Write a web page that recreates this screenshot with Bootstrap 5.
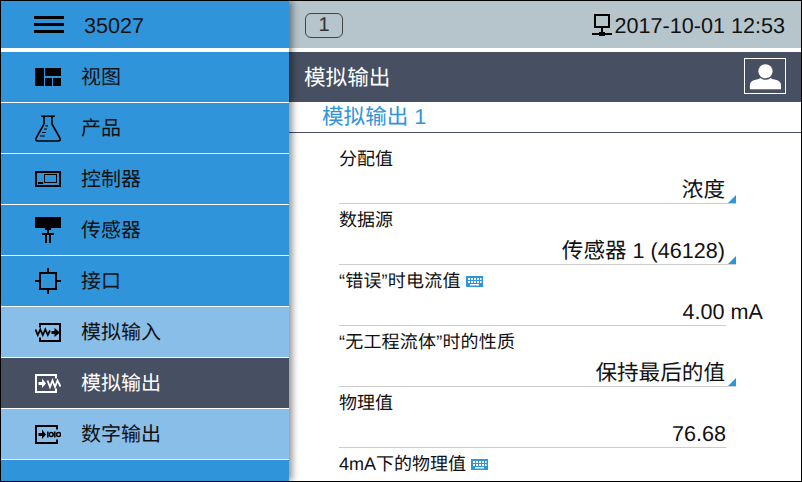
<!DOCTYPE html>
<html lang="zh">
<head>
<meta charset="utf-8">
<title>模拟输出</title>
<link href="https://cdn.jsdelivr.net/npm/bootstrap@5.3.0/dist/css/bootstrap.min.css" rel="stylesheet">
<style>
html,body{margin:0;width:802px;height:482px;overflow:hidden;background:#fff}
body{font-family:"Liberation Sans","Noto Sans CJK SC",sans-serif;color:#111;text-rendering:geometricPrecision}
.frame{width:802px;height:482px;border:1px solid #000;overflow:hidden;display:flex;position:relative}
.side{width:288px;flex:none;background:#3094db;position:relative;z-index:2;box-shadow:3px 0 7px rgba(0,0,0,.45)}
.side-head{height:47px;padding-left:33px;gap:20px;font-size:21.6px}
.side-head span{padding-top:4px}
.side-gap{height:4px;background:#fff;position:relative;box-shadow:0 2px 3px rgba(0,0,0,.2)}
.side-list{border-radius:0;background:transparent}
.side-list .list-group-item,.side-list .list-group-item:last-child{height:51px;padding:0 0 0 34px;gap:20px;background:#3094db;border:0;border-bottom:1px solid #fff;color:#111;font-size:20px;border-radius:0}
.side-list .list-group-item span{padding-top:2px}
.side-list .list-group-item.lit{background:#89bee8}
.side-list .list-group-item.cur{background:#474f62;color:#fff}
.side-list svg{flex:none;display:block}
.pane{flex:1;min-width:0;display:flex;flex-direction:column}
.topbar{height:47px;flex:none;background:#b6c4cc;padding:0 16px 0 16px;font-size:21.6px}
.count{width:38px;height:25px;border:1.5px solid #444;border-radius:6px;font-size:20px;line-height:22px;text-align:center;color:#333;margin-top:1px}
.clock{gap:3px;padding-top:3px}
.top-gap{height:4px;flex:none;background:#fff}
.titlebar{height:50px;flex:none;background:#474f62;color:#fff;font-size:21.6px;padding:0 15px}
.titlebar span{padding-top:2px}
.userbox{width:42px;height:36px;border:1.5px solid #fff;display:block;margin-top:-2px}
.sect{height:31px;flex:none;border-bottom:1px solid #474f62;color:#3094db;font-size:21.6px;line-height:29px;padding-left:33px}
.fields{padding:10px 0 0 50px;flex:1;overflow:hidden}
.fld{height:61px;width:387px;border-bottom:1px solid #ccc;position:relative;font-size:18px}
.fld.tri{width:397px}
.fld-l{height:30px;padding-top:2px;display:flex;align-items:center;gap:5px;white-space:nowrap}
.spread{letter-spacing:.2px}
.fld-v{font-size:21.6px;line-height:34px;text-align:right;white-space:nowrap;height:30px}
.fld.tri .fld-v{padding-right:11px}
.fld .unit{margin-left:6px;margin-right:-37px}
.corner{position:absolute;right:0;bottom:0;width:8px;height:8px;background:#3094db;clip-path:polygon(100% 0,100% 100%,0 100%)}
</style>
</head>
<body>
<div class="frame">
  <aside class="side">
    <div class="side-head d-flex align-items-center">
      <svg width="30" height="17" viewBox="0 0 30 17" fill="#000"><rect y="0" width="30" height="3"/><rect y="7" width="30" height="3"/><rect y="14" width="30" height="3"/></svg>
      <span>35027</span>
    </div>
    <div class="side-gap"></div>
    <div class="list-group list-group-flush side-list">
      <a class="list-group-item d-flex align-items-center">
        <svg width="26" height="18" viewBox="0 0 26 18" fill="#000" shape-rendering="crispEdges"><rect width="8.500" height="18"/><rect x="10" width="16" height="8"/><rect x="10" y="10" width="7" height="8"/><rect x="18" y="10" width="8" height="8"/></svg>
        <span>视图</span>
      </a>
      <a class="list-group-item d-flex align-items-center">
        <svg width="26" height="27" viewBox="0 0 26 27" fill="none" stroke="#000" stroke-width="1.600"><path d="M6 1.200H20M9 1.200V9L1.400 22.500Q-.3 26 3 26H23Q26.300 26 24.600 22.500L17 9V1.200" stroke-linejoin="round"/><path d="M5 21H10M7 17.500H11M9 14H12M10.500 10.800H13" stroke-width="1.200"/></svg>
        <span>产品</span>
      </a>
      <a class="list-group-item d-flex align-items-center">
        <svg width="26" height="16" viewBox="0 0 26 16" fill="none" stroke="#000" shape-rendering="crispEdges"><rect x="1" y="1" width="24" height="14" stroke-width="2"/><rect x="9.500" y="3.500" width="12" height="8" stroke-width="1.500"/><rect x="3" y="11" width="5" height="2" fill="#000" stroke="none"/></svg>
        <span>控制器</span>
      </a>
      <a class="list-group-item d-flex align-items-center">
        <svg width="26" height="26" viewBox="0 0 26 26" fill="#000" shape-rendering="crispEdges"><rect width="26" height="11"/><rect x="10" y="11" width="6" height="2"/><rect x="12" y="13" width="2" height="3"/><rect x="7" y="16" width="12" height="2"/><rect x="10" y="18" width="2" height="8"/><rect x="14" y="18" width="2" height="8"/></svg>
        <span>传感器</span>
      </a>
      <a class="list-group-item d-flex align-items-center">
        <svg width="26" height="26" viewBox="0 0 26 26" fill="#000" shape-rendering="crispEdges"><path d="M4 4H22V22H4ZM6 6V20H20V6Z" fill-rule="evenodd"/><rect x="0" y="12" width="4" height="2"/><rect x="22" y="12" width="4" height="2"/><rect x="12" y="0" width="2" height="4"/><rect x="12" y="22" width="2" height="4"/></svg>
        <span>接口</span>
      </a>
      <a class="list-group-item lit d-flex align-items-center">
        <svg width="26" height="19" viewBox="0 0 26 19" fill="none" stroke="#000" stroke-width="2"><path d="M5 4.500V1H25V18H5V14.500"/><path d="M0.500 6.500L2.800 12L5.300 6.500L7.800 12L10.300 6.500L12.800 12L15 7.500" stroke-width="1.800"/><path d="M16.500 8H19.500V5L25 9.500L19.500 14V11H16.500Z" fill="#000" stroke="none"/></svg>
        <span>模拟输入</span>
      </a>
      <a class="list-group-item cur d-flex align-items-center">
        <svg width="26" height="19" viewBox="0 0 26 19" fill="none" stroke="#fff" stroke-width="2"><path d="M21 4.500V1H1V18H21V14.500"/><path d="M3.500 8H7V4.500L11 9.500L7 14V11H3.500Z" fill="#fff" stroke="none"/><path d="M12.500 6.500L15 13L17.500 6.500L20 13L22.500 6.500L25.500 12.500" stroke-width="1.800"/></svg>
        <span>模拟输出</span>
      </a>
      <a class="list-group-item lit d-flex align-items-center">
        <svg width="26" height="19" viewBox="0 0 26 19" fill="none" stroke="#000" stroke-width="1.500"><path d="M22 4.500V1H1V18H22V14.500" stroke-width="2"/><path d="M3.500 8H7V4.500L11 9.500L7 14V11H3.500Z" fill="#000" stroke="none"/><path d="M12.800 6.500V12.500M19.800 6.500V12.500"/><circle cx="16.200" cy="9.500" r="2"/><circle cx="23.500" cy="9.500" r="2"/></svg>
        <span>数字输出</span>
      </a>
    </div>
  </aside>
  <main class="pane">
    <div class="topbar d-flex align-items-center justify-content-between">
      <div class="count">1</div>
      <div class="clock d-flex align-items-center">
        <svg width="20" height="23" viewBox="0 0 20 23" fill="none" stroke="#000" stroke-width="2" shape-rendering="crispEdges"><rect x="3" y="1" width="14" height="12"/><path d="M10 13V19"/><path d="M0 20H20" stroke-width="1.500"/><rect x="7" y="18" width="6" height="4" fill="#000" stroke="none"/></svg>
        <span>2017-10-01 12:53</span>
      </div>
    </div>
    <div class="top-gap"></div>
    <div class="titlebar d-flex align-items-center justify-content-between">
      <span>模拟输出</span>
      <svg class="userbox" viewBox="0 0 42 36"><circle cx="21.500" cy="13" r="7.500" fill="#fff"/><path d="M5 32V28Q5 23 11 22Q15 21.300 16 20Q21.500 24 27 20Q28 21.300 32 22Q38 23 38 28V32Z" fill="#fff"/></svg>
    </div>
    <div class="sect">模拟输出 1</div>
    <div class="fields">
      <div class="fld tri"><div class="fld-l">分配值</div><div class="fld-v">浓度</div><i class="corner"></i></div>
      <div class="fld tri"><div class="fld-l">数据源</div><div class="fld-v">传感器 1 (46128)</div><i class="corner"></i></div>
      <div class="fld"><div class="fld-l"><span class="spread">“错误”时电流值</span><svg width="17" height="11" viewBox="0 0 17 11"><rect width="17" height="11" fill="#3094db"/><path d="M2 2h2v2H2zM5 2h2v2H5zM8 2h2v2H8zM11 2h2v2h-2zM14 2h1.500v2H14zM2 5h2v2H2zM5 5h2v2H5zM8 5h2v2H8zM11 5h2v2h-2zM14 5h1.500v2H14zM4 8h9v1.500H4z" fill="#fff"/></svg></div><div class="fld-v">4.00<span class="unit">mA</span></div></div>
      <div class="fld tri"><div class="fld-l"><span class="spread">“无工程流体”时的性质</span></div><div class="fld-v">保持最后的值</div><i class="corner"></i></div>
      <div class="fld"><div class="fld-l">物理值</div><div class="fld-v">76.68</div></div>
      <div class="fld"><div class="fld-l"><span>4mA下的物理值</span><svg width="17" height="11" viewBox="0 0 17 11"><rect width="17" height="11" fill="#3094db"/><path d="M2 2h2v2H2zM5 2h2v2H5zM8 2h2v2H8zM11 2h2v2h-2zM14 2h1.500v2H14zM2 5h2v2H2zM5 5h2v2H5zM8 5h2v2H8zM11 5h2v2h-2zM14 5h1.500v2H14zM4 8h9v1.500H4z" fill="#fff"/></svg></div></div>
    </div>
  </main>
</div>
</body>
</html>
